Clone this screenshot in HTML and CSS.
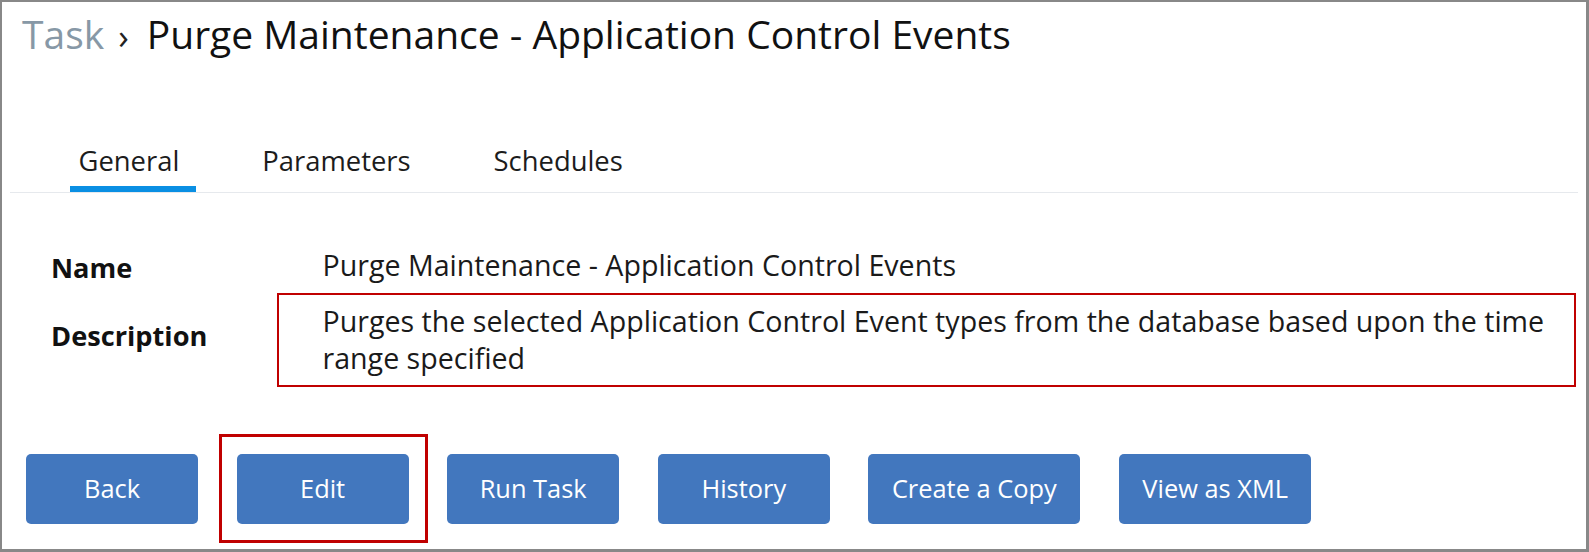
FILE: index.html
```html
<!DOCTYPE html>
<html>
<head>
<meta charset="utf-8">
<link rel="stylesheet" href="styles.css">
</head>
<body>
<div class="frame">
  <h1 class="title"><span class="crumb">Task</span><span class="sep">›</span><span class="current">Purge Maintenance - Application Control Events</span></h1>
  <nav class="tabs">
    <div class="tab active">General</div>
    <div class="tab">Parameters</div>
    <div class="tab">Schedules</div>
  </nav>
  <div class="fields">
    <div class="label name-label">Name</div>
    <div class="value">Purge Maintenance - Application Control Events</div>
    <div class="label desc-label">Description</div>
    <div class="value desc-value">Purges the selected Application Control Event types from the database based upon the time range specified</div>
  </div>
  <div class="actions">
    <button class="btn">Back</button>
    <button class="btn marked">Edit</button>
    <button class="btn">Run Task</button>
    <button class="btn">History</button>
    <button class="btn">Create a Copy</button>
    <button class="btn">View as XML</button>
  </div>
</div>
</body>
</html>
```
FILE: styles.css
```css
html, body {
  margin: 0;
  padding: 0;
  background: #ffffff;
}
.frame {
  box-sizing: border-box;
  width: 1589px;
  height: 552px;
  border: 2px solid #888888;
  border-right-width: 3px;
  border-bottom-width: 3px;
  font-family: "Open Sans", "Noto Sans", sans-serif;
  color: #1a1a1a;
  overflow: hidden;
}
.title {
  margin: 0;
  padding: 6px 0 0 20px;
  font-size: 39px;
  font-weight: 400;
  line-height: 52px;
  height: 52px;
  display: flex;
  align-items: baseline;
  white-space: nowrap;
}
.crumb {
  color: #8798a6;
}
.sep {
  font-size: 35px;
  margin: 0 18px 0 14px;
  color: #222222;
}
.current {
  color: #111111;
}
.tabs {
  display: flex;
  gap: 57px;
  margin: 82px 8px 0 8px;
  padding-left: 59.5px;
  border-bottom: 1px solid #e6e9ed;
}
.tab {
  font-size: 27.4px;
  line-height: 38px;
  padding: 0 17px 5.6px 9px;
  border-bottom: 6px solid transparent;
  color: #1c1c1c;
}
.tab.active {
  border-bottom-color: #0a8fe3;
}
.fields {
  display: grid;
  grid-template-columns: 271.5px 1230px;
  row-gap: 15px;
  margin-top: 53px;
  padding-left: 49px;
}
.label {
  font-size: 27.2px;
  font-weight: 700;
  line-height: 37.5px;
  color: #111111;
}
.name-label {
  padding-top: 3.6px;
}
.desc-label {
  padding-top: 15.5px;
}
.value {
  font-size: 28.6px;
  line-height: 37.5px;
  color: #1a1a1a;
  position: relative;
}
.desc-value::after {
  content: "";
  position: absolute;
  left: -45.5px;
  right: -23.5px;
  top: -9px;
  bottom: -10px;
  border: 2.5px solid #c00000;
}
.actions {
  display: flex;
  gap: 38.6px;
  margin: 77.5px 0 0 24px;
}
.btn {
  box-sizing: border-box;
  min-width: 172px;
  height: 70px;
  padding: 0 23.5px 2px 23.5px;
  border: none;
  border-radius: 5px;
  background: #4277be;
  color: #ffffff;
  font-family: "Open Sans", "Noto Sans", sans-serif;
  font-size: 25.4px;
  position: relative;
}
.btn.marked::after {
  content: "";
  position: absolute;
  left: -17.7px;
  right: -19px;
  top: -20px;
  bottom: -18.7px;
  border: 3px solid #c00000;
}
```
